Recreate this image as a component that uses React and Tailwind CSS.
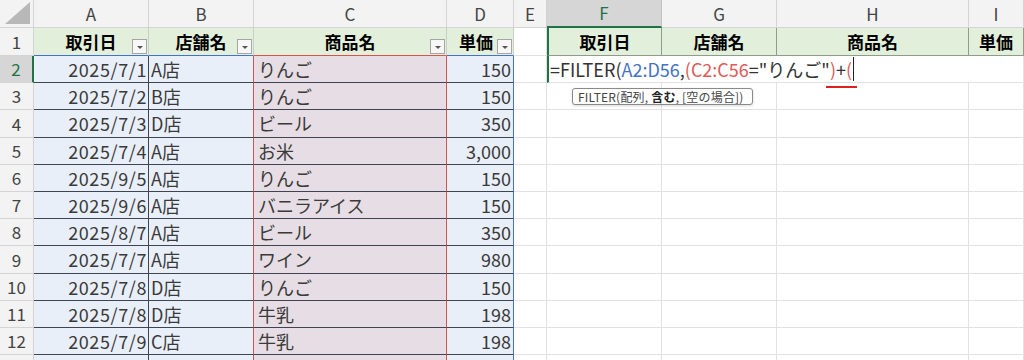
import React from 'react';

const rows = [
  ['2025/7/1', 'A店', 'りんご', '150'],
  ['2025/7/2', 'B店', 'りんご', '150'],
  ['2025/7/3', 'D店', 'ビール', '350'],
  ['2025/7/4', 'A店', 'お米', '3,000'],
  ['2025/9/5', 'A店', 'りんご', '150'],
  ['2025/9/6', 'A店', 'バニラアイス', '150'],
  ['2025/8/7', 'A店', 'ビール', '350'],
  ['2025/7/7', 'A店', 'ワイン', '980'],
  ['2025/7/8', 'D店', 'りんご', '150'],
  ['2025/7/8', 'D店', '牛乳', '198'],
  ['2025/7/9', 'C店', '牛乳', '198'],
  ['', '', '', ''],
];

const letters = ['A', 'B', 'C', 'D', 'E', 'F', 'G', 'H', 'I'];

function FilterButton() {
  return (
    <span className="absolute right-[1px] bottom-[1px] w-[15px] h-[15px] border border-[#a6a6a6] bg-[#f7f7f7] flex items-center justify-center">
      <span className="w-0 h-0 border-l-[3px] border-r-[3px] border-t-[3px] border-l-transparent border-r-transparent border-t-[#555] mt-[2px]" />
    </span>
  );
}

function App() {
  return (
    <div className="w-[1024px] h-[360px] overflow-hidden bg-white relative font-['Noto_Sans_CJK_JP','Noto_Sans',sans-serif] text-[16px]">
      <div className="grid grid-cols-[34px_115px_105px_193px_67px_33px_115px_115px_192px_55px] grid-rows-[28px_28px_27px_27px_28px_27px_27px_27px_27px_28px_27px_27px_27px_27px]">
        {/* Column headers */}
        <div className="bg-[#f3f3f3] border-r border-b border-[#d4d4d4] relative overflow-hidden">
          <svg className="absolute right-[3px] bottom-[3px]" width="25" height="22" viewBox="0 0 25 22">
            <polygon points="25,0 25,22 0,22" fill="#b8b8b8" />
          </svg>
        </div>
        {letters.map((l) =>
          l === 'F' ? (
            <div key={l} className="bg-[#d6d6d6] border-r border-[#c4c4c4] border-b-2 border-b-[#217346] flex items-center justify-center text-[17px] text-[#217346]">
              {l}
            </div>
          ) : (
            <div key={l} className="bg-[#f3f3f3] border-r border-b border-[#d4d4d4] flex items-center justify-center text-[17px] text-[#444]">
              {l}
            </div>
          )
        )}

        {/* Row 1 */}
        <div className="bg-[#f3f3f3] border-r border-b border-[#d4d4d4] flex items-center justify-center text-[17px] text-[#444]">1</div>
        <div className="bg-[#e2efda] border-r border-[#c9cfc6] border-b border-b-[#4472c4] relative flex items-center justify-center text-[17px] font-bold text-black">
          取引日
          <FilterButton />
        </div>
        <div className="bg-[#e2efda] border-r border-[#c9cfc6] border-b border-b-[#4472c4] relative flex items-center justify-center text-[17px] font-bold text-black">
          店舗名
          <FilterButton />
        </div>
        <div className="bg-[#e2efda] border-r border-[#c9cfc6] border-b border-b-[#d9534f] relative flex items-center justify-center text-[17px] font-bold text-black">
          商品名
          <FilterButton />
        </div>
        <div className="bg-[#e2efda] border-r border-[#c9cfc6] border-b border-b-[#4472c4] relative flex items-center justify-center text-[17px] font-bold text-black pr-2">
          単価
          <FilterButton />
        </div>
        <div className="bg-white border-r border-b border-[#e1e1e1]" />
        <div className="bg-[#e2efda] border-r border-b border-[#8e9c8a] border-l-2 border-l-[#217346] flex items-center justify-center text-[17px] font-bold text-black">取引日</div>
        <div className="bg-[#e2efda] border-r border-b border-[#8e9c8a] flex items-center justify-center text-[17px] font-bold text-black">店舗名</div>
        <div className="bg-[#e2efda] border-r border-b border-[#8e9c8a] flex items-center justify-center text-[17px] font-bold text-black">商品名</div>
        <div className="bg-[#e2efda] border-r border-b border-[#8e9c8a] flex items-center justify-center text-[17px] font-bold text-black">単価</div>

        {/* Data rows */}
        {rows.map((r, i) => {
          const n = i + 2;
          const active = n === 2;
          const label = n <= 12 ? n : '';
          return (
            <React.Fragment key={n}>
              {active ? (
                <div className="bg-[#d6d6d6] border-r-2 border-r-[#217346] border-b border-[#d4d4d4] flex items-center justify-center text-[17px] text-[#217346]">{label}</div>
              ) : (
                <div className="bg-[#f3f3f3] border-r border-b border-[#d4d4d4] flex items-center justify-center text-[17px] text-[#444]">{label}</div>
              )}
              <div className="bg-[#e9eff9] border-r border-b border-[#3f4550] flex items-center justify-end pr-[1px] text-[18px] tracking-[0.6px] text-[#3a3a3a]">{r[0]}</div>
              <div className="bg-[#e9eff9] border-r border-r-[#d9534f] border-b border-b-[#3f4550] flex items-center pl-[2px] text-[18px] text-[#3a3a3a]">{r[1]}</div>
              <div className="bg-[#e6dee4] border-r border-r-[#d9534f] border-b border-b-[#3f4550] flex items-center pl-[4px] text-[18px] text-[#3a3a3a]">{r[2]}</div>
              <div className="bg-[#e9eff9] border-r border-r-[#4472c4] border-b border-b-[#3f4550] flex items-center justify-end pr-[2px] text-[18px] text-[#3a3a3a]">{r[3]}</div>
              <div className="bg-white border-r border-b border-[#e1e1e1]" />
              {active ? (
                <div className="col-span-3 bg-white border-l-2 border-l-[#217346] border-b border-b-[#e1e1e1] flex items-center pl-[1px] text-[18px] text-[#333] whitespace-nowrap">
                  <span>=FILTER(</span>
                  <span className="text-[#4472c4]">A2:D56</span>
                  <span>,</span>
                  <span className="text-[#e05a5a]">(C2:C56</span>
                  <span>=&quot;りんご&quot;</span>
                  <span className="text-[#e05a5a]">)</span>
                  <span>+</span>
                  <span className="text-[#e05a5a]">(</span>
                  <span className="w-[1px] h-[24px] bg-[#222] ml-[1px]" />
                </div>
              ) : (
                <>
                  <div className="bg-white border-r border-b border-[#e1e1e1]" />
                  <div className="bg-white border-r border-b border-[#e1e1e1]" />
                  <div className="bg-white border-r border-b border-[#e1e1e1]" />
                </>
              )}
              <div className="bg-white border-r border-b border-[#e1e1e1]" />
            </React.Fragment>
          );
        })}
      </div>

      {/* Red underline under the open paren */}
      <div className="absolute left-[826px] top-[86px] w-[31px] h-[2px] bg-[#e02020]" />

      {/* Function tooltip */}
      <div className="absolute left-[572px] top-[88px] w-[181px] h-[17px] px-[5px] bg-white border border-[#8a8a8a] rounded-[3px] shadow-[0_1px_3px_rgba(0,0,0,0.15)] flex items-center text-[12px] tracking-[0.2px] text-[#444] whitespace-pre">
        FILTER(配列, <span className="font-bold text-[#222]">含む</span>, [空の場合])
      </div>
    </div>
  );
}

export default App;
